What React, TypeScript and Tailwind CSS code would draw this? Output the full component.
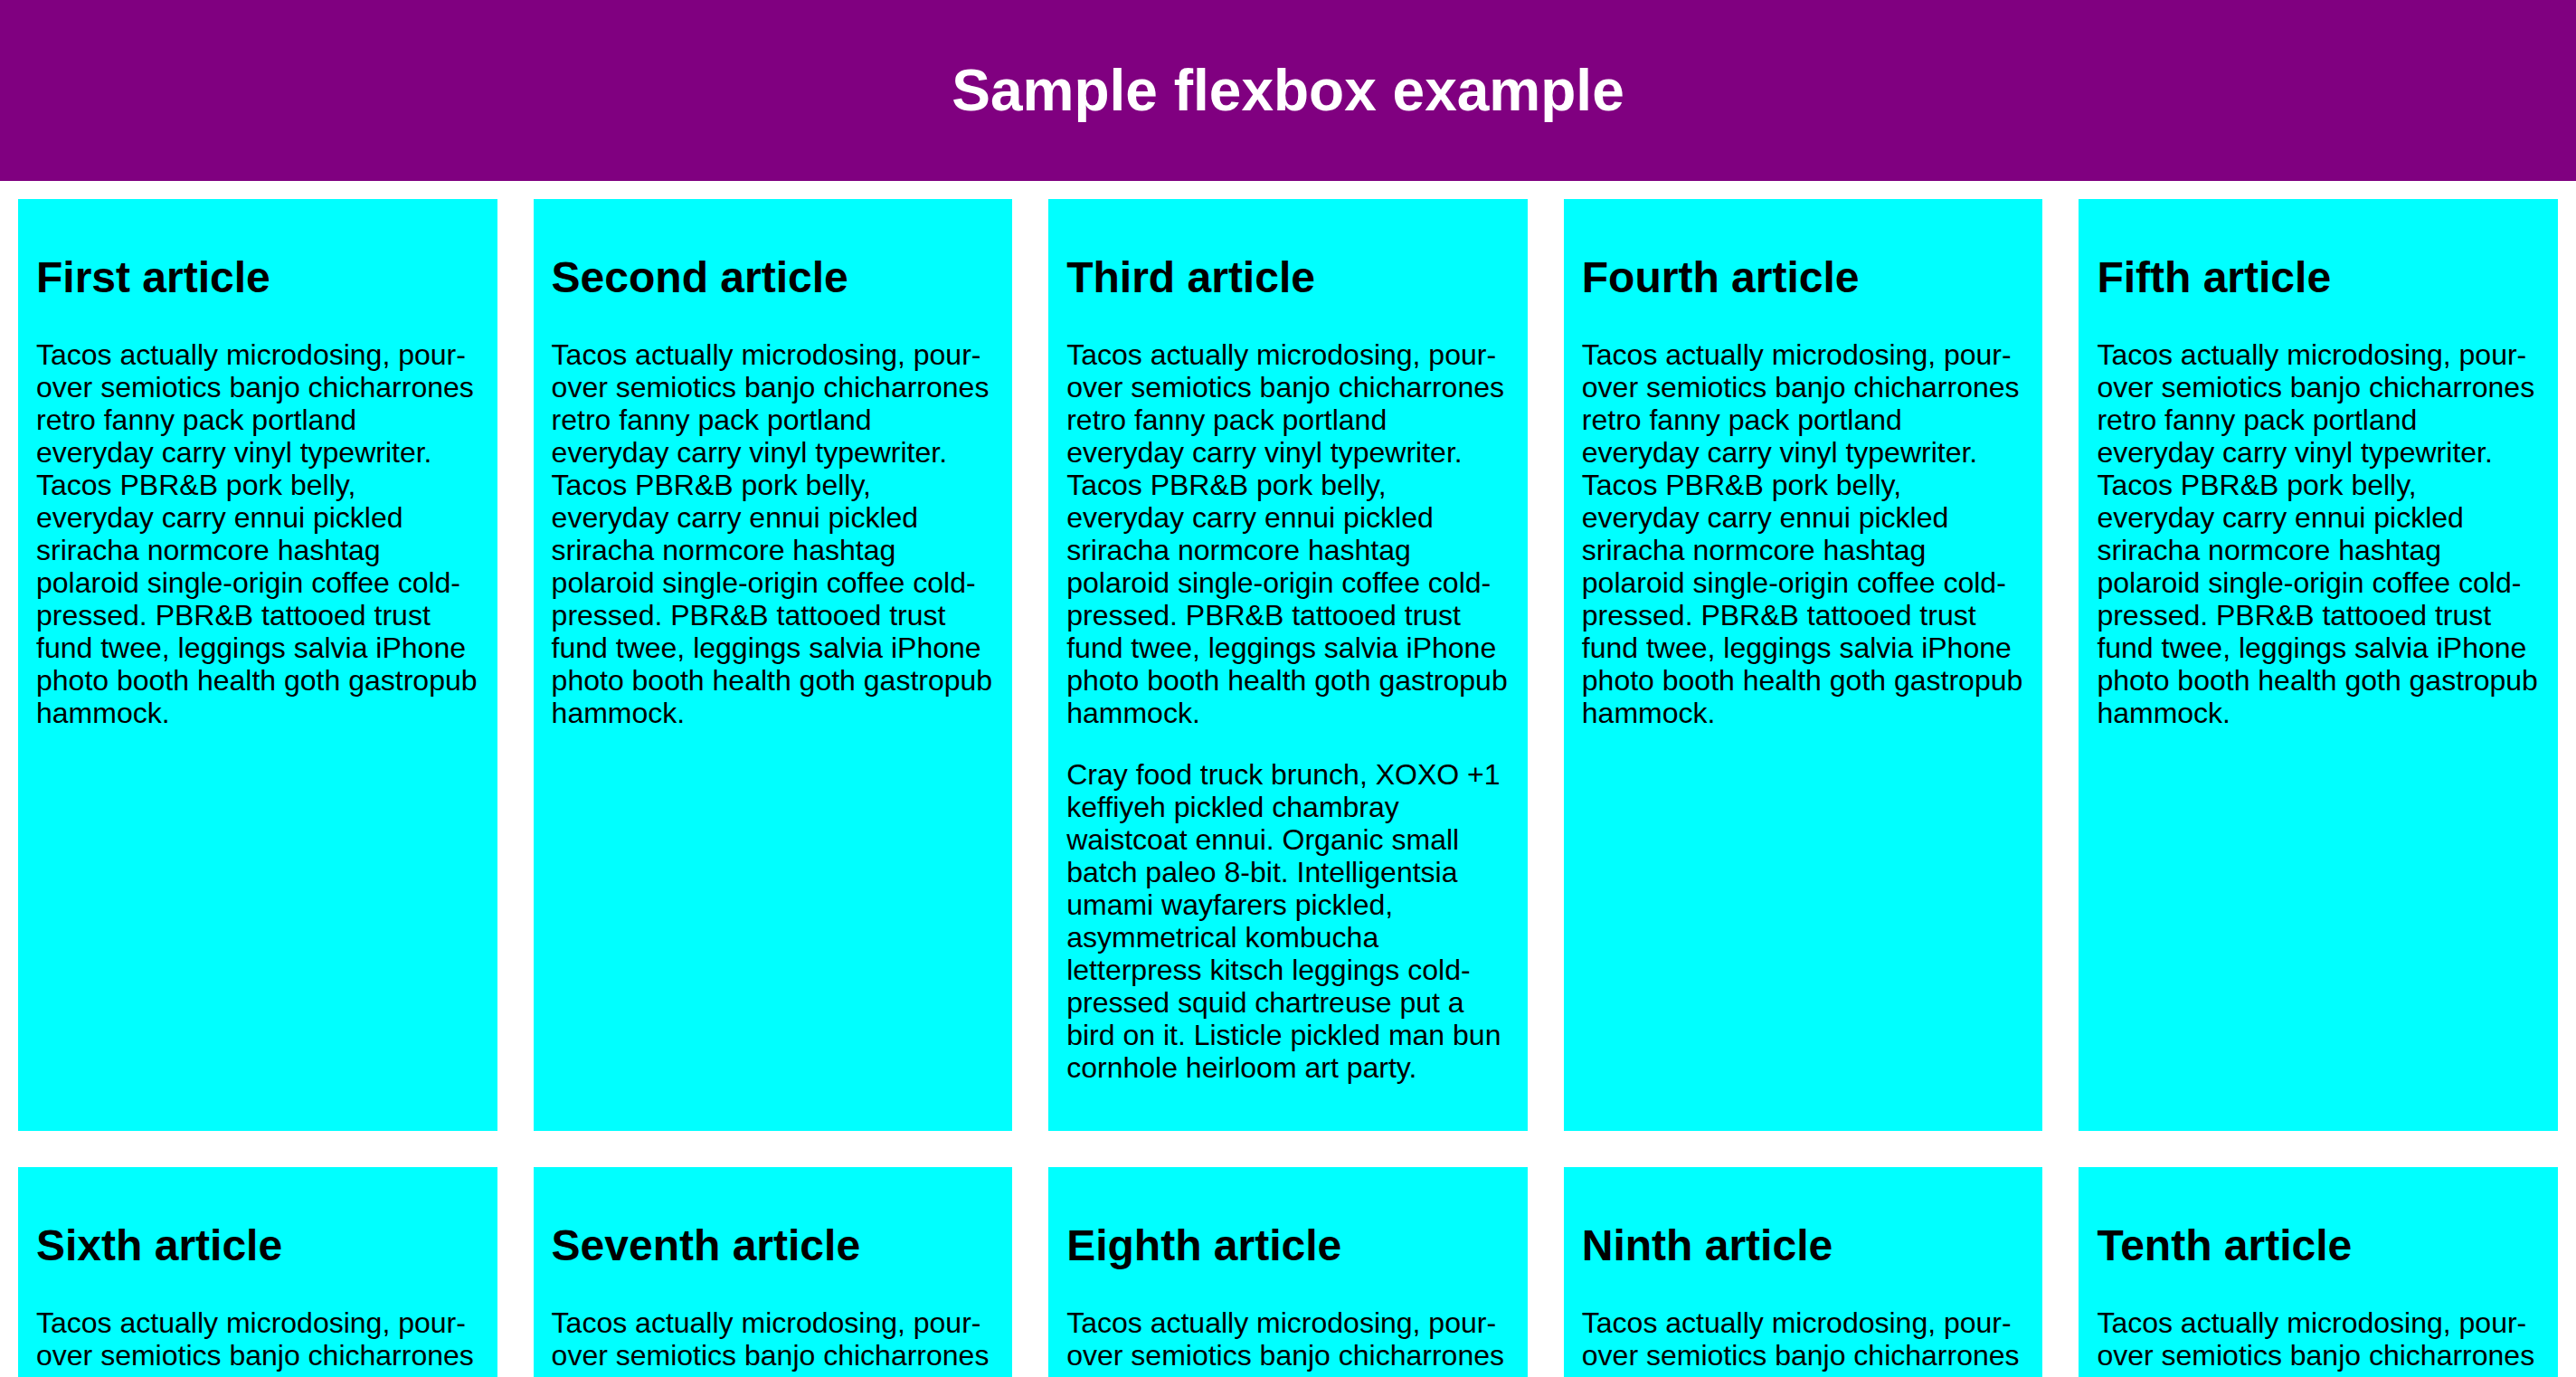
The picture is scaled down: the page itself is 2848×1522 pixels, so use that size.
const names = [
  "First",
  "Second",
  "Third",
  "Fourth",
  "Fifth",
  "Sixth",
  "Seventh",
  "Eighth",
  "Ninth",
  "Tenth",
];

const tacos =
  "Tacos actually microdosing, pour-over semiotics banjo chicharrones retro fanny pack portland everyday carry vinyl typewriter. Tacos PBR&B pork belly, everyday carry ennui pickled sriracha normcore hashtag polaroid single-origin coffee cold-pressed. PBR&B tattooed trust fund twee, leggings salvia iPhone photo booth health goth gastropub hammock.";

const cray =
  "Cray food truck brunch, XOXO +1 keffiyeh pickled chambray waistcoat ennui. Organic small batch paleo 8-bit. Intelligentsia umami wayfarers pickled, asymmetrical kombucha letterpress kitsch leggings cold-pressed squid chartreuse put a bird on it. Listicle pickled man bun cornhole heirloom art party.";

export default function App() {
  return (
    <div className="min-h-screen bg-white font-['Liberation_Sans',Arial,Helvetica,sans-serif] text-black">
      {/* Header */}
      <header className="h-[200px] bg-[#800080]">
        <h1 className="m-0 text-center text-[64px] font-bold leading-[200px] text-white">
          Sample flexbox example
        </h1>
      </header>

      {/* Articles: basis 400px of content + 40px padding */}
      <section className="flex flex-wrap">
        {names.map((name, i) => (
          <article
            key={name}
            className="m-[20px] flex-[1_1_440px] bg-[#00ffff] p-[20px]"
          >
            <h2 className="my-[40px] text-[48px] font-bold leading-[54px]">
              {name} article
            </h2>
            <p className="my-[32px] text-[32px] leading-[36px]">{tacos}</p>
            {i === 2 && (
              <p className="my-[32px] text-[32px] leading-[36px]">{cray}</p>
            )}
          </article>
        ))}
      </section>
    </div>
  );
}
